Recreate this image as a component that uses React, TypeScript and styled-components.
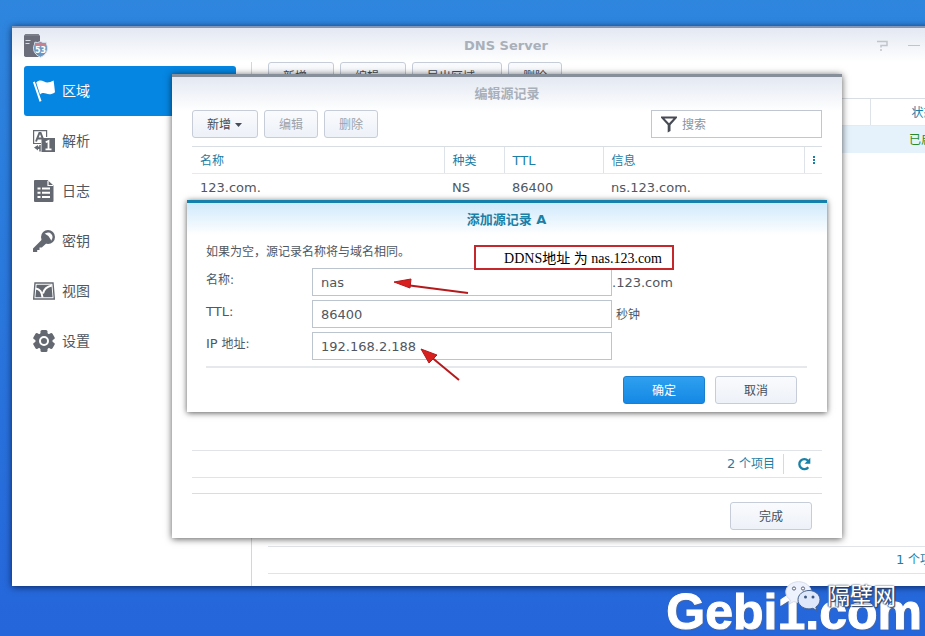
import React from 'react';
import styled, { createGlobalStyle, css } from 'styled-components';

const sans = "'DejaVu Sans', 'Noto Sans CJK SC', sans-serif";
const teal = '#1a80a6';

const GlobalStyle = createGlobalStyle`
  *, *::before, *::after { box-sizing: border-box; }
  body { margin: 0; font-family: ${sans}; font-size: 12px; line-height: 20px; color: #505760; }
  button, input { font-family: inherit; font-size: inherit; color: inherit; line-height: 20px; margin: 0; }
`;

const Desktop = styled.div`
  position: relative;
  display: flex;
  flex-direction: column;
  min-height: 100vh;
  overflow: hidden;
  background: linear-gradient(#2f86dd 0, #2b7ddd 30%, #2566db 100%);
`;

const Window = styled.section`
  position: relative;
  flex: 1;
  display: flex;
  flex-direction: column;
  margin: 26px -78px 50px 12px;
  background: #fff;
  box-shadow: 0 1px 7px rgba(0, 15, 50, 0.75);
`;

const TitleBar = styled.header`
  display: grid;
  grid-template-columns: 1fr auto 1fr;
  align-items: center;
  height: 36px;
  padding: 1px 15px 0 12px;
  border-top: 2px solid #8496b3;
  background: linear-gradient(#e3e8f2, #fff);
`;

const WindowTitle = styled.h1`
  margin: 0;
  font-size: 13px;
  font-weight: bold;
  color: #a9b0ba;
`;

const WindowControls = styled.div`
  display: flex;
  justify-content: flex-end;
  gap: 12px;
`;

const ControlButton = styled.button`
  display: flex;
  align-items: center;
  justify-content: center;
  width: 20px;
  height: 20px;
  padding: 0;
  border: 0;
  background: none;
  color: #c0c5cc;
`;

const WindowBody = styled.div`
  flex: 1;
  display: flex;
`;

const Sidebar = styled.nav`
  flex: 0 0 240px;
  padding: 4px 15px 0 12px;
  border-right: 1px solid #d3d7dc;
`;

const NavItem = styled.a<{ $active?: boolean }>`
  display: flex;
  align-items: center;
  gap: 7px;
  height: 50px;
  padding-left: 9px;
  border-radius: 3px;
  font-size: 14px;
  text-decoration: none;
  color: ${p => (p.$active ? '#fff' : '#505760')};
  background: ${p => (p.$active ? '#0586e2' : 'transparent')};
  svg { color: ${p => (p.$active ? '#fff' : '#646971')}; }
`;

const ZonePane = styled.main`
  flex: 1;
  display: flex;
  flex-direction: column;
  padding: 0 16px 12px;
`;

const Toolbar = styled.div`
  display: flex;
  gap: 6px;
  margin-bottom: 8px;
`;

const Button = styled.button<{ $primary?: boolean; $wide?: boolean }>`
  display: flex;
  align-items: center;
  justify-content: center;
  gap: 4px;
  height: 28px;
  padding: 2px 14px 0;
  min-width: ${p => (p.$wide ? '82px' : '54px')};
  border: 1px solid #c6cdd8;
  border-radius: 3px;
  background: linear-gradient(#fafbfd, #edf1f8);
  color: #474e58;
  &:disabled { color: #9ca3ac; }
  ${p => p.$primary && css`
    border-color: #1b7fce;
    background: linear-gradient(#2fa0f0, #1488e4);
    color: #fff;
  `}
`;

const SearchBox = styled.label`
  display: flex;
  align-items: center;
  gap: 5px;
  width: 171px;
  height: 28px;
  margin-left: auto;
  padding: 0 9px;
  border: 1px solid #c0c7d0;
  background: #fff;
  input {
    flex: 1;
    min-width: 0;
    padding: 2px 0 0;
    border: 0;
    outline: 0;
    background: none;
  }
  input::placeholder { color: #8d939c; opacity: 1; }
`;

const Grid = styled.table`
  width: 100%;
  table-layout: fixed;
  border-collapse: collapse;
  th, td { height: 27px; padding: 2px 8px 0; text-align: left; white-space: nowrap; }
  th {
    border-top: 1px solid #d9dee4;
    border-bottom: 1px solid #e6eaee;
    font-weight: normal;
    color: ${teal};
  }
  th + th { border-left: 1px solid #dde3e9; }
`;

const SelectedRow = styled.tr`
  background: #e5f1fb;
`;

const StatusHead = styled.th`
  && { padding-left: 41px; }
`;

const StatusCell = styled.td`
  && { padding-left: 39px; color: #2a8a2a; }
`;

const Col = styled.col<{ $w?: number }>`
  width: ${p => (p.$w ? `${p.$w}px` : 'auto')};
`;

const MenuHead = styled.th`
  && { padding: 0; text-align: center; }
`;

const MenuButton = styled.button`
  display: flex;
  align-items: center;
  justify-content: center;
  width: 18px;
  height: 20px;
  padding: 0;
  border: 0;
  background: none;
  color: ${teal};
`;

const PagingBar = styled.div<{ $inset: number }>`
  display: flex;
  align-items: center;
  justify-content: flex-end;
  height: 28px;
  margin-top: auto;
  padding-right: ${p => p.$inset}px;
  border: solid #e0e4e8;
  border-width: 1px 0;
  color: ${teal};
`;

const RefreshButton = styled.button`
  display: flex;
  align-items: center;
  justify-content: center;
  width: 24px;
  height: 20px;
  margin-left: 8px;
  padding: 0 0 0 8px;
  border: 0;
  border-left: 1px solid #d5dae0;
  background: none;
  color: ${teal};
  box-sizing: content-box;
`;

const Latin = styled.span`
  font-size: 13px;
`;

const Dialog = styled.section`
  position: absolute;
  top: 48px;
  right: 161px;
  bottom: 48px;
  left: 160px;
  display: flex;
  flex-direction: column;
  padding: 0 20px 8px;
  border-top: 3px solid #87909a;
  background: linear-gradient(#e3e8f2 0, #fff 34px);
  box-shadow: 0 1px 7px rgba(0, 0, 0, 0.65);
`;

const DialogTitle = styled.h2<{ $accent?: boolean }>`
  margin: 0;
  padding: 7px 0 6px;
  font-size: 13px;
  font-weight: bold;
  text-align: center;
  color: ${p => (p.$accent ? teal : '#a9b0ba')};
`;

const DialogActions = styled.div`
  display: flex;
  justify-content: flex-end;
  gap: 10px;
  padding: 8px 10px 0 0;
`;

const CloseActions = styled(DialogActions)`
  margin-top: 15px;
  border-top: 1px solid #d9dde2;
`;

const Sheet = styled.section`
  position: absolute;
  top: 123px;
  right: 15px;
  left: 15px;
  padding: 0 20px 8px 19px;
  border-top: 3px solid #1580ab;
  background: linear-gradient(#cfe9fb 0, #fff 32px);
  box-shadow: 0 1px 6px rgba(0, 0, 0, 0.65);
`;

const Note = styled.p`
  margin: 6px 0;
`;

const Form = styled.form`
  margin: 0;
`;

const Fields = styled.div`
  display: flex;
  flex-direction: column;
  gap: 4px;
  padding-bottom: 6px;
  border-bottom: 2px solid #e6e9eb;
`;

const Field = styled.div`
  display: flex;
  align-items: flex-start;
  label { flex: 0 0 106px; line-height: 24px; }
`;

const TextInput = styled.input`
  width: 300px;
  height: 28px;
  padding: 0 8px;
  border: 1px solid #bcc4cd;
  border-radius: 0;
  outline: 0;
  background: #fff;
  font-size: 13px;
`;

const Suffix = styled.span<{ $spaced?: boolean }>`
  padding-left: ${p => (p.$spaced ? '4px' : '0')};
  line-height: 30px;
  height: 28px;
`;

const Callout = styled.div`
  position: absolute;
  top: 42px;
  left: 287px;
  display: flex;
  align-items: center;
  justify-content: flex-end;
  width: 200px;
  height: 25px;
  padding: 2px 10px 0 0;
  border: 2px solid #c4282c;
  background: #fff;
  font-family: 'Liberation Serif', 'Noto Sans CJK SC', serif;
  font-size: 14px;
  color: #000;
  white-space: nowrap;
`;

const Arrows = styled.svg`
  position: absolute;
  top: 72px;
  left: 203px;
  pointer-events: none;
`;

const SiteMark = styled.div`
  position: absolute;
  right: 3px;
  bottom: -4px;
  font-family: 'Liberation Sans', sans-serif;
  font-size: 50px;
  line-height: 56px;
  font-weight: bold;
  color: #fff;
  -webkit-text-stroke: 1px #fff;
  text-shadow: 0 0 2px #4a5f8c, 1px 1px 1px #5a6e98;
`;

const AccountMark = styled.div`
  position: absolute;
  right: 29px;
  bottom: 24px;
  display: flex;
  align-items: center;
  gap: 6px;
  font-size: 23px;
  line-height: 32px;
  color: #fff;
  text-shadow: 1px 1px 1px #2b3b58, 0 0 2px #33466b, -1px 0 1px #6a7ea3;
`;

const Caret = () => (
  <svg width="8" height="5" viewBox="0 0 8 5" aria-hidden="true"><path d="M0 0h7L3.500 4z" fill="currentColor" /></svg>
);

const AppIcon = () => (
  <svg width="24" height="24" viewBox="0 0 24 24" aria-hidden="true">
    <path d="M1.500 0h13l1.500 2v21H1.500L0 22V1.500z" fill="#6b6e7a" />
    <path d="M1 1h14" stroke="#8b8e99" />
    <path d="M1.500 6.500h5M1.500 9.500h4" stroke="#d6dae1" />
    <path d="M10.800 8.200q3 1 5.700-.7 2.700 1.700 5.700.7 0 2 1.100 4.200c.8 4.700-1.600 8.600-6.800 10.800-5.200-2.200-7.600-6.100-6.800-10.800q1.100-2.200 1.100-4.200z" fill="#6a97c0" stroke="#dde3ec" />
    <path d="M11.300 9q2.800.7 5.200-.8 2.400 1.500 5.200.8l.7 3H10.600z" fill="#c9808e" />
    <text x="16.500" y="18.800" fontSize="8" fontWeight="bold" textAnchor="middle" fill="#fff" fontFamily="DejaVu Sans, sans-serif">53</text>
  </svg>
);

const FlagIcon = () => (
  <svg width="22" height="22" viewBox="0 0 22 22" fill="currentColor" aria-hidden="true">
    <path d="M0 2.200 1.800 1.500 8.500 21 6.600 21.700z" />
    <path d="M3.200 2.400C6-.2 8.500.2 11 1.600c3 1.600 6 .7 9.600-1.100q.8 5.800 1.400 11.800c-3.300 2.300-6 2.600-9 1.300-2.500-1.100-4-.6-6 .8z" />
  </svg>
);

const ResolveIcon = () => (
  <svg width="22" height="22" viewBox="0 0 22 22" fill="none" stroke="currentColor" aria-hidden="true">
    <path d="M8 13.500H.6V.6h13V7" strokeWidth="1.200" />
    <path d="M3 11.500 6.400 3h1.200l3.200 8M4.500 8.500h5" strokeWidth="2" />
    <rect x="8.500" y="8" width="13.500" height="14" fill="currentColor" stroke="none" />
    <path d="M12.700 12.300l2.800-1.300v8.500M12.500 19.300h6" stroke="#fff" strokeWidth="1.800" />
    <path d="M7 15v6.500" strokeWidth="1.500" />
    <path d="M1 17.500l4-2.500v1.500h2v2.500H5v1.500z" fill="currentColor" stroke="none" />
  </svg>
);

const LogIcon = () => (
  <svg width="22" height="22" viewBox="0 0 22 22" aria-hidden="true">
    <path d="M2 0h12.500L20.500 5.500V21q0 1-1 1H2q-1 0-1-1V1q0-1 1-1z" fill="currentColor" />
    <path d="M15 1v4.500h5" fill="none" stroke="#fff" strokeWidth="1.200" />
    <path d="M4.500 8.500h3M4.500 12.700h3M4.500 17h3M9 8.500h8M9 12.700h8M9 17h8" stroke="#fff" strokeWidth="2" />
  </svg>
);

const KeyIcon = () => (
  <svg width="22" height="22" viewBox="0 0 22 22" fill="none" aria-hidden="true">
    <path d="M9 9.500 0 18.500V22h4.200v-2h2.300v-2.500h2.300l4.400-4z" fill="currentColor" />
    <circle cx="15" cy="7" r="7" fill="currentColor" />
    <path d="M13 3.800q2.800-1.500 4.800.6 2 2.300.5 4.800-1.200-3.600-5.300-5.400z" fill="#fff" stroke="#fff" strokeWidth="1.200" />
  </svg>
);

const ViewIcon = () => (
  <svg width="22" height="18" viewBox="0 0 22 18" fill="none" aria-hidden="true">
    <path d="M2 1h18l1.300 16H.7z" stroke="currentColor" strokeWidth="1.400" />
    <path d="M3.600 2.800h14.900l1.100 12.400H2.400z" fill="currentColor" />
    <path d="M2.700 6.500C7 7 9 9.500 9.500 15.500M10 11.500C11 7 14 4.500 18.800 3.500" stroke="#fff" strokeWidth="2" />
  </svg>
);

const GearIcon = () => (
  <svg width="22" height="22" viewBox="0 0 22 22" aria-hidden="true">
    <g fill="currentColor">
      <circle cx="11" cy="11" r="8.600" />
      {[0, 60, 120].map(a => (
        <rect key={a} x="7.500" y="0" width="7" height="22" rx="1.500" transform={`rotate(${a} 11 11)`} />
      ))}
    </g>
    <circle cx="11" cy="11" r="4" fill="none" stroke="#fff" strokeWidth="2" />
  </svg>
);

const FilterIcon = () => (
  <svg width="16" height="17" viewBox="0 0 16 17" aria-hidden="true">
    <path d="M0 .5h16v1.300L9.500 9v6L6.700 16.500V9L0 1.800zM3.500 2.500 8 7.300l4.500-4.800z" fill="#464b54" fillRule="evenodd" />
  </svg>
);

const RefreshIcon = () => (
  <svg width="14" height="14" viewBox="0 0 14 14" aria-hidden="true">
    <path d="M11.300 10.200A5 5 0 1 1 11 3.700" fill="none" stroke="currentColor" strokeWidth="2.300" />
    <path d="M13.300.8v6H7.500z" fill="currentColor" />
  </svg>
);

const DotsIcon = () => (
  <svg width="2" height="8" viewBox="0 0 2 8" fill="currentColor" aria-hidden="true">
    <path d="M0 0h2v2H0zM0 3h2v2H0zM0 6h2v2H0z" />
  </svg>
);

const ChatIcon = () => (
  <svg width="36" height="31" viewBox="0 0 36 31" aria-hidden="true">
    <path d="M13.500.7C6.500.7.800 5.300.800 11.100c0 3.200 1.800 6 4.600 7.900l-1.200 4 4.500-2.400c1.500.4 3 .7 4.800.7 7 0 12.700-4.500 12.700-10.200S20.500.7 13.500.7z" fill="#eef2fc" stroke="#d5dcec" />
    <path d="M24 9.500c-6 0-11 4-11 9.200s5 9.200 11 9.200c1.300 0 2.600-.2 3.800-.6l4 2.200-1-3.500c2.600-1.700 4.200-4.300 4.200-7.300 0-5.200-5-9.200-11-9.200z" fill="#dfe7fb" stroke="#45618f" />
    <g fill="#fff" stroke="#53617c"><circle cx="9" cy="7.500" r="1.600" /><circle cx="18" cy="7.500" r="1.600" /></g>
    <g fill="#3e5782"><circle cx="20.500" cy="16" r="1.500" /><circle cx="28" cy="16" r="1.500" /></g>
  </svg>
);

const navItems = [
  { label: '区域', icon: <FlagIcon />, active: true },
  { label: '解析', icon: <ResolveIcon /> },
  { label: '日志', icon: <LogIcon /> },
  { label: '密钥', icon: <KeyIcon /> },
  { label: '视图', icon: <ViewIcon /> },
  { label: '设置', icon: <GearIcon /> },
];

const AddRecordSheet = () => (
  <Sheet aria-labelledby="add-title">
    <DialogTitle id="add-title" $accent>添加源记录 A</DialogTitle>
    <Form onSubmit={e => e.preventDefault()}>
      <Note>如果为空，源记录名称将与域名相同。</Note>
      <Fields>
        <Field>
          <label htmlFor="name">名称:</label>
          <TextInput id="name" defaultValue="nas" />
          <Suffix><Latin>.123.com</Latin></Suffix>
        </Field>
        <Field>
          <label htmlFor="ttl"><Latin>TTL:</Latin></label>
          <TextInput id="ttl" defaultValue="86400" />
          <Suffix $spaced>秒钟</Suffix>
        </Field>
        <Field>
          <label htmlFor="ip"><Latin>IP</Latin> 地址:</label>
          <TextInput id="ip" defaultValue="192.168.2.188" />
        </Field>
      </Fields>
      <DialogActions>
        <Button type="submit" $primary $wide>确定</Button>
        <Button type="button" $wide>取消</Button>
      </DialogActions>
    </Form>
    <Callout>DDNS地址 为 nas.123.com</Callout>
    <Arrows width="80" height="110" viewBox="0 0 80 110" aria-hidden="true">
      <g stroke="#b5191c" strokeWidth="2" fill="#d8201f">
        <path d="M16 10 78 18" />
        <path d="M4 7 21 4 20 13z" strokeWidth="1" />
        <path d="M40 81 69 105" />
        <path d="M31 74 47 80 39 88z" strokeWidth="1" />
      </g>
    </Arrows>
  </Sheet>
);

const EditRecordsDialog = () => (
  <Dialog aria-labelledby="edit-title">
    <DialogTitle id="edit-title">编辑源记录</DialogTitle>
    <Toolbar>
      <Button>新增 <Caret /></Button>
      <Button disabled>编辑</Button>
      <Button disabled>删除</Button>
      <SearchBox>
        <FilterIcon />
        <input type="search" placeholder="搜索" aria-label="搜索" />
      </SearchBox>
    </Toolbar>
    <Grid>
      <colgroup><Col $w={252} /><Col $w={60} /><Col $w={99} /><Col /><Col $w={18} /></colgroup>
      <thead>
        <tr>
          <th>名称</th>
          <th>种类</th>
          <th><Latin>TTL</Latin></th>
          <th>信息</th>
          <MenuHead><MenuButton aria-label="列"><DotsIcon /></MenuButton></MenuHead>
        </tr>
      </thead>
      <tbody>
        <tr>
          <td><Latin>123.com.</Latin></td>
          <td><Latin>NS</Latin></td>
          <td><Latin>86400</Latin></td>
          <td><Latin>ns.123.com.</Latin></td>
          <td />
        </tr>
      </tbody>
    </Grid>
    <PagingBar $inset={6}>
      <span><Latin>2</Latin> 个项目</span>
      <RefreshButton aria-label="刷新"><RefreshIcon /></RefreshButton>
    </PagingBar>
    <CloseActions>
      <Button $wide>完成</Button>
    </CloseActions>
    <AddRecordSheet />
  </Dialog>
);

export default function App() {
  return (
    <>
      <GlobalStyle />
      <Desktop>
        <Window>
          <TitleBar>
            <AppIcon />
            <WindowTitle>DNS Server</WindowTitle>
            <WindowControls>
              <ControlButton aria-label="帮助">
                <svg width="12" height="12" viewBox="0 0 12 12" fill="none" stroke="currentColor"><path d="M1 1.500h10v4H5v2M5 9v2" strokeWidth="1.500" /></svg>
              </ControlButton>
              <ControlButton aria-label="最小化">
                <svg width="12" height="12" viewBox="0 0 12 12" stroke="currentColor"><path d="M0 5.500h12" strokeWidth="1" /></svg>
              </ControlButton>
              <ControlButton aria-label="最大化">
                <svg width="12" height="12" viewBox="0 0 12 12" fill="none" stroke="currentColor"><path d="M1 1h10v10H1z" strokeWidth="2" /></svg>
              </ControlButton>
              <ControlButton aria-label="关闭">
                <svg width="12" height="12" viewBox="0 0 12 12" stroke="currentColor"><path d="M1 1l10 10M11 1 1 11" strokeWidth="2" /></svg>
              </ControlButton>
            </WindowControls>
          </TitleBar>
          <WindowBody>
            <Sidebar>
              {navItems.map(item => (
                <NavItem key={item.label} href="#" $active={item.active}>{item.icon}{item.label}</NavItem>
              ))}
            </Sidebar>
            <ZonePane>
              <Toolbar>
                <Button>新增 <Caret /></Button>
                <Button>编辑 <Caret /></Button>
                <Button>导出区域 <Caret /></Button>
                <Button>删除</Button>
              </Toolbar>
              <Grid>
                <colgroup><Col /><Col $w={117} /></colgroup>
                <thead><tr><th>区域</th><StatusHead>状态</StatusHead></tr></thead>
                <tbody><SelectedRow><td><Latin>123.com</Latin></td><StatusCell>已启用</StatusCell></SelectedRow></tbody>
              </Grid>
              <PagingBar $inset={2}>
                <span><Latin>1</Latin> 个项目</span>
                <RefreshButton aria-label="刷新"><RefreshIcon /></RefreshButton>
              </PagingBar>
            </ZonePane>
          </WindowBody>
          <EditRecordsDialog />
        </Window>
        <SiteMark>Gebi1.com</SiteMark>
        <AccountMark><ChatIcon />隔壁网</AccountMark>
      </Desktop>
    </>
  );
}
